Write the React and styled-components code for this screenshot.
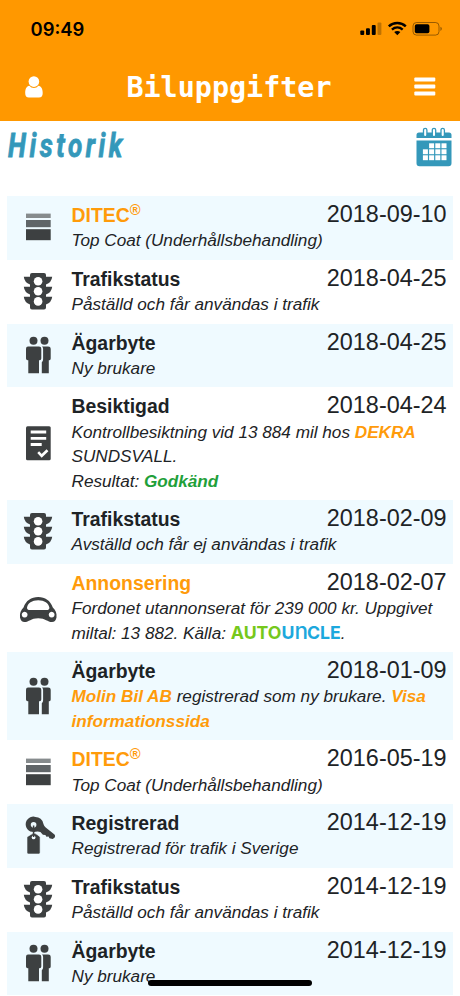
import styled, { createGlobalStyle } from 'styled-components';

const DARK = '#3d4041';

const icons = {
    layers: (
        <>
            <rect x="7" y="5.6" width="24.7" height="4.4" fill="#868b8d" />
            <rect x="7" y="12" width="24.7" height="7.2" fill="#606568" />
            <rect x="7" y="21.2" width="24.7" height="11" />
        </>
    ),
    traffic: (
        <>
            <path d="M13 1h12q2 0 2 2v1.800h6.200q-.6 5.800-6.200 7.600v2.400h6.200q-.6 5.800-6.200 7.600v2.400h6.200q-.6 5.800-6.200 7.600v3q0 2-2 2H13q-2 0-2-2v-3q-5.600-1.800-6.200-7.600H11v-2.400q-5.600-1.800-6.200-7.600H11v-2.400q-5.600-1.800-6.200-7.600H11V3q0-2 2-2z" />
            <circle cx="19.1" cy="9.2" r="4.3" fill="#fff" />
            <circle cx="19.1" cy="19.3" r="4.3" fill="#fff" />
            <circle cx="19.1" cy="29.4" r="4.3" fill="#fff" />
        </>
    ),
    people: (
        <>
            <circle cx="14.5" cy="4.7" r="4" />
            <circle cx="25.5" cy="4.7" r="4" />
            <path d="M9 10.500h11q2.300 0 2.300 2.300v9.700q0 1.700-1.700 1.700h-.6v13H9.300v-13h-.6q-1.700 0-1.700-1.700v-9.700q0-2.300 2-2.300z" />
            <path d="M23 10.500h6.200q2.500 0 2.500 2.300v9.700q0 1.700-1.300 1.700h-.6v13h-7V26.200q1.300-.8 1.300-3V12.800q0-1.500-1.100-2.300z" />
        </>
    ),
    report: (
        <>
            <rect x="7" y="2.3" width="24.7" height="34" rx="1.5" />
            <path d="M11.700 8h15.500M11.700 14.300h15.500M11.700 20.500h11" stroke="#fff" strokeWidth="2.8" />
            <path d="M19.200 28.200l3.500 3.600 5.800-5.600" fill="none" stroke="#fff" strokeWidth="2.6" />
        </>
    ),
    car: (
        <path
            fillRule="evenodd"
            d="M1 29.500C.5 25 2 21.800 4.500 19.500C7 12.500 12.200 9 19.200 9S31.300 12.500 33.800 19.500C36.500 21.800 38 25 37.500 29.500Q36.500 34 33 34C28.500 34 26.500 30.200 19.200 30.200S10 34 5.500 34Q2 34 1 29.500zM8 19.700Q8 22 11 22H27.400Q30.400 22 30.400 19.700C29.500 15 25.500 12.200 19.200 12.200S8.800 15 8 19.700zM5.600 23.800a2.900 2.900 0 1 0 .1 0zM32.600 23.800a2.900 2.900 0 1 0 .1 0z"
        />
    ),
    key: (
        <>
            <path d="M16.500.9a8 8 0 0 1 7.800 6.600c.3 1.500 1.300 3 2.700 4.200l8.500 6.800q1.200 1.500 0 3.200l-1.800 1.200-3.300-.6-.8-1.700-2.200.2-1-1.900-2.500-.1-2.500-2.800q-2.200-1-4.900-.3A7.700 7.700 0 1 1 16.500.9z" />
            <circle cx="14.6" cy="8.7" r="2.8" fill="#effaff" />
            <path d="M12 18.400q3-2.500 6 0l3.100 2.500v15.500q0 1.600-1.600 1.600H9.700Q8 38 8 36.400V20.900z" stroke="#effaff" strokeWidth=".6" />
            <circle cx="14.6" cy="21.4" r="1.9" fill="#effaff" />
            <path d="M14.600 9.500v11.500" stroke={DARK} strokeWidth="1.5" />
        </>
    ),
};

function StatusBar() {
    return (
        <Status>
            <Clock>09:49</Clock>
            <svg width="84" height="16" viewBox="0 0 84 16">
                <rect x="0.3" y="9.5" width="3.9" height="4.5" rx="1" />
                <rect x="6" y="7.3" width="3.9" height="6.7" rx="1" />
                <rect x="11.8" y="4" width="3.9" height="10" rx="1" />
                <rect x="17.5" y="1.5" width="3.9" height="12.5" rx="1" fillOpacity=".25" />
                <g fill="none" stroke="#000" strokeWidth="2.4">
                    <path d="M28.800 5.400c4.700-4.500 12.300-4.500 17 0" />
                    <path d="M31.900 8.600c3.200-2.900 7.600-2.900 10.800 0" />
                </g>
                <path d="M34.200 11c1.900-1.500 4.300-1.500 6.200 0l-3.100 3.200z" />
                <rect x="53" y="1.5" width="26" height="12.6" rx="3.5" fill="none" stroke="#000" strokeOpacity=".4" />
                <rect x="54.8" y="3.3" width="14.6" height="9" rx="1.8" />
                <path d="M80.400 5.700v4.200q1.500-.5 1.500-2.100t-1.500-2.100z" fillOpacity=".4" />
            </svg>
        </Status>
    );
}

function CalendarIcon() {
    const cells = [[1, 0], [2, 0], [3, 0], [0, 1], [1, 1], [2, 1], [3, 1], [0, 2], [1, 2], [2, 2], [3, 2]];
    return (
        <svg width="36" height="40" viewBox="0 0 36 40">
            <path d="M3 5.500h30q2.500 0 2.500 2.500v3H.5V8q0-2.500 2.500-2.500zM.5 13.500h35v22.700q0 3-3 3h-29q-3 0-3-3z" fill="#3498ba" />
            {[9.2, 18, 26.7].map((x) => (
                <rect key={x} x={x - 1.7} y="1.3" width="3.4" height="8.3" rx="1.7" fill="#fff" stroke="#3498ba" strokeWidth="1.3" />
            ))}
            {cells.map(([c, r]) => (
                <rect key={c + '-' + r} x={6.9 + c * 6.2} y={16.3 + r * 6} width="5" height="4.9" fill="#fff" />
            ))}
        </svg>
    );
}

function AutoUncle() {
    return (
        <Logo>
            <Green>AUTO</Green>
            <Blue>U<Arch>n</Arch>CLE</Blue>
        </Logo>
    );
}

function Entry({ entry, shaded }) {
    return (
        <Row $shaded={shaded}>
            <IconCell>
                <svg width="38" height="38" viewBox="0 0 38 38" fill={DARK}>{icons[entry.icon]}</svg>
            </IconCell>
            <div>
                <Heading>
                    <Title $link={entry.link}>{entry.title}{entry.mark && <Mark>{entry.mark}</Mark>}</Title>
                    <DateText>{entry.date}</DateText>
                </Heading>
                <Description>{entry.text}</Description>
            </div>
        </Row>
    );
}

function App() {
    return (
        <Screen>
            <GlobalStyle />
            <Header>
                <StatusBar />
                <NavBar>
                    <svg width="18" height="22" viewBox="0 0 18 22" fill="#fff">
                        <circle cx="8.9" cy="5.6" r="5.3" />
                        <path d="M4.300 9.800Q6.200 12 8.900 12t4.600-2.200c2.800.4 4.200 3.100 4.200 7.300q0 4.500-3.700 4.500H3.900q-3.700 0-3.700-4.500c0-4.200 1.300-6.900 4.100-7.300z" />
                    </svg>
                    <Brand>Biluppgifter</Brand>
                    <svg width="22" height="20" viewBox="0 0 22 20" fill="#fff">
                        <rect x="0.3" y="0.5" width="21" height="4" rx="1" />
                        <rect x="0.3" y="7.5" width="21" height="4" rx="1" />
                        <rect x="0.3" y="14.5" width="21" height="4" rx="1" />
                    </svg>
                </NavBar>
            </Header>
            <SectionHead>
                <SectionTitle>Historik</SectionTitle>
                <CalendarIcon />
            </SectionHead>
            <List>
                {entries.map((entry, i) => <Entry key={i} entry={entry} shaded={i % 2 === 0} />)}
            </List>
            <HomeIndicator />
        </Screen>
    );
}

const GlobalStyle = createGlobalStyle`
    body {
        margin: 0;
        background: #fff;
    }
    * {
        box-sizing: border-box;
    }
    svg {
        display: block;
        flex: none;
    }
`;
const Screen = styled.div`
    position: relative;
    width: 460px;
    height: 996px;
    overflow: hidden;

    font-family: "Liberation Sans", Arial, sans-serif;
    color: #1d2326;
`;
const Header = styled.header`
    height: 120.5px;
    background: #ff9800;
`;
const Status = styled.div`
    display: flex;
    align-items: center;
    justify-content: space-between;

    height: 57px;
    padding: 0 16px 0 30.5px;
`;
const Clock = styled.div`
    font-family: Inter, sans-serif;
    font-size: 18.4px;
    font-weight: 600;
    color: #000;
`;
const NavBar = styled.nav`
    display: flex;
    align-items: center;
    justify-content: space-between;

    height: 59px;
    padding: 0 24.5px;
`;
const Brand = styled.div`
    padding: 2px 0 0 2px;

    font-family: "DejaVu Sans Mono", monospace;
    font-size: 28.4px;
    font-weight: 700;
    line-height: 34px;
    color: #fff;
`;
const SectionHead = styled.div`
    display: flex;
    align-items: flex-start;
    justify-content: space-between;

    height: 75.5px;
    padding: 6.5px 8.5px 0 8px;
`;
const SectionTitle = styled.h1`
    margin: 0;

    font-family: Roboto, sans-serif;
    font-size: 33px;
    font-style: italic;
    font-weight: 700;
    line-height: 37px;
    letter-spacing: 4.5px;
    color: #3498ba;

    -webkit-text-stroke: .8px #3498ba;
    transform: scaleX(.79);
    transform-origin: left;
`;
const List = styled.main`
    width: 446px;
    margin-left: 7px;
`;
const Row = styled.div`
    display: grid;
    grid-template-columns: 64.5px 1fr;

    padding: 6px 6.5px 7.1px 0;

    background: ${props => props.$shaded ? '#effaff' : '#fff'};
`;
const IconCell = styled.div`
    display: flex;
    align-items: center;

    padding-left: 12px;
`;
const Heading = styled.div`
    display: flex;
    align-items: baseline;
    justify-content: space-between;

    height: 26.3px;
    line-height: 24px;
`;
const Title = styled.div`
    font-size: 19.4px;
    font-weight: 700;
    color: ${props => props.$link ? '#ff9b0a' : 'inherit'};
`;
const Mark = styled.sup`
    font-size: 14.7px;
    line-height: 0;
`;
const DateText = styled.div`
    font-size: 23.4px;
`;
const Description = styled.div`
    font-size: 17.17px;
    font-style: italic;
    line-height: 24.4px;
    white-space: nowrap;
`;
const Link = styled.span`
    font-weight: 700;
    color: #ff9b0a;
`;
const Passed = styled.span`
    font-weight: 700;
    color: #1fa03a;
`;
const Logo = styled.span`
    font-family: Inter, sans-serif;
    font-size: 17.7px;
    font-style: normal;
    font-weight: 700;
    line-height: 0;
`;
const Green = styled.span`
    color: #76c81c;
`;
const Blue = styled.span`
    color: #1ca8dd;
`;
const Arch = styled.span`
    font-size: 22.5px;
    font-weight: 500;
    letter-spacing: -1px;
`;
const HomeIndicator = styled.div`
    position: absolute;
    left: 148px;
    bottom: 10px;

    width: 164px;
    height: 6px;
    border-radius: 3px;

    background: #000;
`;

const entries = [
    { icon: 'layers', title: 'DITEC', mark: '®', link: true, date: '2018-09-10', text: 'Top Coat (Underhållsbehandling)' },
    { icon: 'traffic', title: 'Trafikstatus', date: '2018-04-25', text: 'Påställd och får användas i trafik' },
    { icon: 'people', title: 'Ägarbyte', date: '2018-04-25', text: 'Ny brukare' },
    {
        icon: 'report', title: 'Besiktigad', date: '2018-04-24',
        text: <>Kontrollbesiktning vid 13 884 mil hos <Link>DEKRA</Link><br />SUNDSVALL.<br />Resultat: <Passed>Godkänd</Passed></>,
    },
    { icon: 'traffic', title: 'Trafikstatus', date: '2018-02-09', text: 'Avställd och får ej användas i trafik' },
    {
        icon: 'car', title: 'Annonsering', link: true, date: '2018-02-07',
        text: <>Fordonet utannonserat för 239 000 kr. Uppgivet<br />miltal: 13 882. Källa: <AutoUncle />.</>,
    },
    {
        icon: 'people', title: 'Ägarbyte', date: '2018-01-09',
        text: <><Link>Molin Bil AB</Link> registrerad som ny brukare. <Link>Visa<br />informationssida</Link></>,
    },
    { icon: 'layers', title: 'DITEC', mark: '®', link: true, date: '2016-05-19', text: 'Top Coat (Underhållsbehandling)' },
    { icon: 'key', title: 'Registrerad', date: '2014-12-19', text: 'Registrerad för trafik i Sverige' },
    { icon: 'traffic', title: 'Trafikstatus', date: '2014-12-19', text: 'Påställd och får användas i trafik' },
    { icon: 'people', title: 'Ägarbyte', date: '2014-12-19', text: 'Ny brukare' },
];

export default App;
